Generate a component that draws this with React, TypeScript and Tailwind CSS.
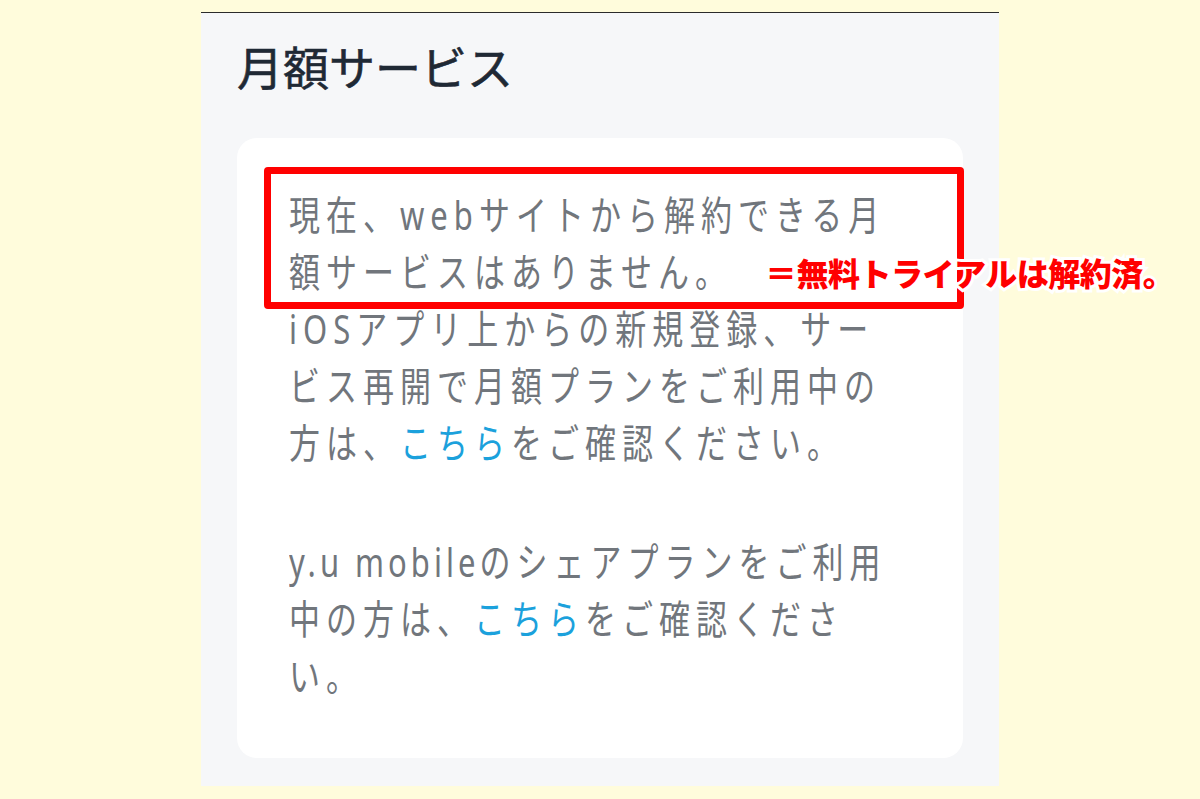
import React from 'react';

const bodyFont = "font-['Noto_Sans','Noto_Sans_CJK_JP',sans-serif]";

const Line: React.FC<{ children: React.ReactNode }> = ({ children }) => (
  <div className="h-[57px] flex items-center whitespace-nowrap">
    <span className="inline-block scale-y-[1.3]">{children}</span>
  </div>
);

const Link: React.FC<{ children: React.ReactNode }> = ({ children }) => (
  <a href="#" className="text-[#1ba1dc]">
    {children}
  </a>
);

export default function App() {
  return (
    <div className={`w-[1200px] h-[799px] bg-[#fffcdc] flex justify-center ${bodyFont}`}>
      <div className="w-[798px] h-[774px] mt-[12px] border-t border-[#2b2b2b] bg-[#f6f7f9] px-9 pt-[24px]">
        <h1 className="text-[46px] leading-[56px] text-[#1f2935] font-['Noto_Sans_CJK_JP',sans-serif] [-webkit-text-stroke:0.6px_#1f2935]">
          月額サービス
        </h1>

        <div className="relative mt-[45px] bg-white rounded-[20px] pl-[52px] pt-[48px] pb-[54px] text-[31px] tracking-[6px] text-[#71767c]">
          {/* annotation box */}
          <div className="absolute left-[27px] top-[29px] w-[700px] h-[142px] border-[7px] border-[#ff0000] rounded-[4px]" />
          <div className="absolute left-[528px] top-[115px] z-10 whitespace-nowrap text-[32px] leading-[38px] tracking-[-0.5px] font-black text-[#ff0000] font-['Noto_Sans_CJK_JP',sans-serif] [-webkit-text-stroke:6px_#ffffff] [paint-order:stroke_fill]">
            ＝無料トライアルは解約済。
          </div>

          <div>
            <Line>現在、webサイトから解約できる月</Line>
            <Line>額サービスはありません。</Line>
            <Line>iOSアプリ上からの新規登録、サー</Line>
            <Line>ビス再開で月額プランをご利用中の</Line>
            <Line>
              方は、<Link>こちら</Link>をご確認ください。
            </Line>
          </div>

          <div className="mt-[62px]">
            <Line>
              <span className="tracking-[4px]">y.u mobile</span>のシェアプランをご利用
            </Line>
            <Line>
              中の方は、<Link>こちら</Link>をご確認くださ
            </Line>
            <Line>い。</Line>
          </div>
        </div>
      </div>
    </div>
  );
}
